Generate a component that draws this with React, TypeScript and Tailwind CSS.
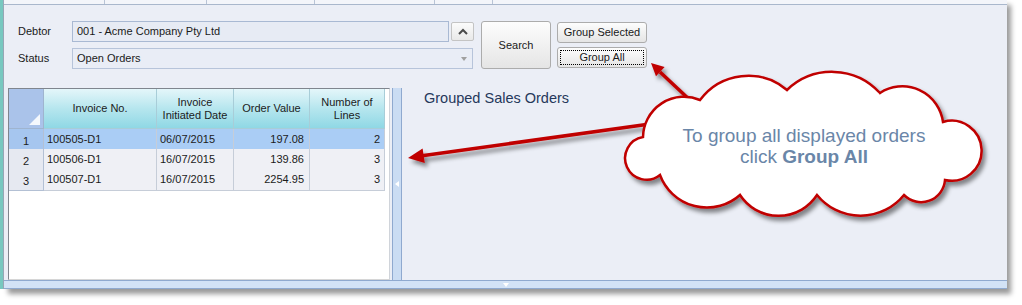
import React from "react";

const rows = [
  { n: "1", inv: "100505-D1", date: "06/07/2015", val: "197.08", lines: "2", sel: true },
  { n: "2", inv: "100506-D1", date: "16/07/2015", val: "139.86", lines: "3", sel: false },
  { n: "3", inv: "100507-D1", date: "16/07/2015", val: "2254.95", lines: "3", sel: false },
];

function Btn({ children, className }: { children: React.ReactNode; className: string }) {
  return (
    <div
      className={
        "relative flex items-center justify-center rounded-[3px] border border-[#acacac] bg-linear-to-b from-[#fdfdfd] to-[#e5e5e5] text-[11px] text-[#1a1a1a] " +
        className
      }
    >
      {children}
    </div>
  );
}

export default function App() {
  return (
    <div className="relative w-[1022px] h-[305px] bg-white overflow-hidden font-['Liberation_Sans',Arial,sans-serif]">
      <div className="flex h-[289px]">
        {/* left teal strip */}
        <div className="flex w-[4px]">
          <div className="w-[3px] bg-[#78c8c0]" />
          <div className="w-[1px] bg-[#9ba9b8]" />
        </div>
        {/* main panel */}
        <div className="flex w-[1003px] flex-col bg-[#ebeef6] shadow-[4px_5px_5px_rgba(0,0,0,0.4)]">
          {/* tab strip */}
          <div className="flex h-[5px] border-b border-[#a9b7cc] bg-[#f3f5fa]">
            <div className="w-[101px] border-r border-[#b9c4d6]" />
            <div className="w-[102px] border-r border-[#b9c4d6]" />
            <div className="w-[108px] border-r border-[#b9c4d6]" />
            <div className="w-[120px] border-r border-[#b9c4d6]" />
            <div className="w-[58px] border-r border-[#b9c4d6]" />
          </div>
          {/* form */}
          <div className="flex h-[82px] pl-[14px] pt-[16px] text-[11px] text-[#1a1a1a]">
            <div className="flex w-[54px] flex-col">
              <div className="flex h-[21px] items-center">Debtor</div>
              <div className="mt-[6px] flex h-[21px] items-center">Status</div>
            </div>
            <div className="flex w-[402px] flex-col">
              <div className="flex gap-[2px]">
                <div className="flex h-[21px] w-[377px] items-center border border-[#a9b9d3] bg-[#e7ebf4] pl-[4px]">
                  001 - Acme Company Pty Ltd
                </div>
                <div className="mt-[1px] flex h-[19px] w-[23px] items-center justify-center rounded-[2px] border border-[#c4c4c4] bg-linear-to-b from-[#fbfbfb] to-[#e9e9e9]">
                  <svg width="10" height="7" viewBox="0 0 10 7">
                    <polyline points="1,6 5,2 9,6" fill="none" stroke="#4a4a4a" strokeWidth="2" />
                  </svg>
                </div>
              </div>
              <div className="mt-[6px] flex h-[21px] w-[401px] items-center justify-between border border-[#b7c4da] bg-[#e9edf6] pl-[4px] pr-[5px]">
                <span>Open Orders</span>
                <svg width="6" height="4" viewBox="0 0 6 4">
                  <polygon points="0,0 6,0 3,4" fill="#a0a0a0" />
                </svg>
              </div>
            </div>
            <Btn className="ml-[7px] h-[48px] w-[70px]">Search</Btn>
            <div className="ml-[6px] flex flex-col">
              <Btn className="mt-[1px] h-[21px] w-[90px]">Group Selected</Btn>
              <Btn className="mt-[4px] h-[21px] w-[90px] border-[#8a8a8a]">
                <div className="absolute inset-[2px] border border-dotted border-black" />
                Group All
              </Btn>
            </div>
          </div>
          {/* content */}
          <div className="flex flex-1">
            <div className="ml-[4px] mt-[1px] flex h-[192px] w-[382px] flex-col border-l border-t border-[#7f858e] border-b-[#d6d6d6] border-r-[#d0d4da] border-b border-r bg-white text-[11px] text-[#1b1b1b]">
              {/* header */}
              <div className="grid h-[40px] grid-cols-[35px_113px_77px_76px_75px]">
                <div className="relative border-b border-r border-[#9fb4cf] bg-[#aac3ea]">
                  <svg className="absolute bottom-[3px] right-[3px]" width="11" height="11" viewBox="0 0 11 11">
                    <polygon points="11,0 11,11 0,11" fill="#f4f8fd" />
                  </svg>
                </div>
                {["Invoice No.", "Invoice\nInitiated Date", "Order Value", "Number of\nLines"].map((h) => (
                  <div
                    key={h}
                    className="flex items-center justify-center whitespace-pre-line border-b border-r border-[#a8cdd8] bg-linear-to-b from-[#e4f6fa] via-[#b6e6ee] to-[#8fd8e5] text-center leading-[13px]"
                  >
                    {h}
                  </div>
                ))}
              </div>
              {rows.map((r) => (
                <div key={r.n} className="grid h-[20px] grid-cols-[35px_113px_77px_76px_75px]">
                  <div
                    className={
                      "flex items-center justify-center border-b border-r border-[#b3c0d4] pt-[4px] " +
                      (r.sel ? "bg-[#a6c6ef]" : "bg-[#e6e9f1]")
                    }
                  >
                    {r.n}
                  </div>
                  <div className={"flex items-center border-b border-r border-[#c6cdd8] pl-[3px] " + (r.sel ? "bg-[#aacdf5]" : "bg-[#eff0f5]")}>
                    {r.inv}
                  </div>
                  <div className={"flex items-center border-b border-r border-[#c6cdd8] pl-[3px] " + (r.sel ? "bg-[#aacdf5]" : "bg-[#eff0f5]")}>
                    {r.date}
                  </div>
                  <div className={"flex items-center justify-end border-b border-r border-[#c6cdd8] pr-[5px] " + (r.sel ? "bg-[#aacdf5]" : "bg-[#eff0f5]")}>
                    {r.val}
                  </div>
                  <div className={"flex items-center justify-end border-b border-r border-[#c6cdd8] pr-[4px] " + (r.sel ? "bg-[#aacdf5]" : "bg-[#eff0f5]")}>
                    {r.lines}
                  </div>
                </div>
              ))}
            </div>
            {/* vertical splitter */}
            <div className="ml-[2px] mt-[1px] flex h-[192px] w-[10px] items-center justify-center border-x border-[#8fa9cf] bg-[#cadcf3]">
              <svg width="4" height="6" viewBox="0 0 4 6">
                <polygon points="4,0 4,6 0,3" fill="#ffffff" />
              </svg>
            </div>
            <div className="flex-1 pl-[22px] pt-[3px] text-[14.5px] leading-[16px] text-[#25385b]">Grouped Sales Orders</div>
          </div>
          {/* bottom splitter */}
          <div className="flex h-[9px] items-center justify-center border-y border-[#8fa9cf] bg-[#d2e2f6]">
            <svg width="6" height="4" viewBox="0 0 6 4">
              <polygon points="0,0 6,0 3,4" fill="#ffffff" />
            </svg>
          </div>
        </div>
      </div>

      {/* annotation overlay */}
      <svg className="pointer-events-none absolute left-0 top-0" width="1022" height="305" viewBox="0 0 1022 305">
        <defs>
          <filter id="sh" x="-20%" y="-20%" width="140%" height="140%">
            <feDropShadow dx="3" dy="4" stdDeviation="2" floodColor="#000" floodOpacity="0.45" />
          </filter>
        </defs>
        <g filter="url(#sh)">
          <line x1="692" y1="102" x2="660" y2="72" stroke="#c00000" strokeWidth="3.5" />
          <polygon points="651,63 664.6,67 656,76.2" fill="#c00000" />
          <line x1="650" y1="124" x2="422" y2="155.7" stroke="#c00000" strokeWidth="3.5" />
          <polygon points="408,158 424.8,163 422.6,148.6" fill="#c00000" />
        </g>
        <path
          filter="url(#sh)"
          d="M 700 100 A 60 60 0 0 1 787 90 A 65 65 0 0 1 880 93 A 41 41 0 0 1 943 122 A 30 30 0 1 1 945 180 A 24 24 0 0 1 904 195 A 56 56 0 0 1 817 195 A 46 46 0 0 1 740 195 A 50 50 0 0 1 660 175 A 21.5 21.5 0 1 1 643 137 A 41 41 0 0 1 700 100 Z"
          fill="#ffffff"
          stroke="#c00000"
          strokeWidth="2.5"
        />
      </svg>
      <div className="pointer-events-none absolute left-[664px] top-[125px] w-[280px] text-center text-[19px] leading-[21px] text-[#6a86a8]">
        To group all displayed orders
        <br />
        click <span className="font-bold">Group All</span>
      </div>
    </div>
  );
}
